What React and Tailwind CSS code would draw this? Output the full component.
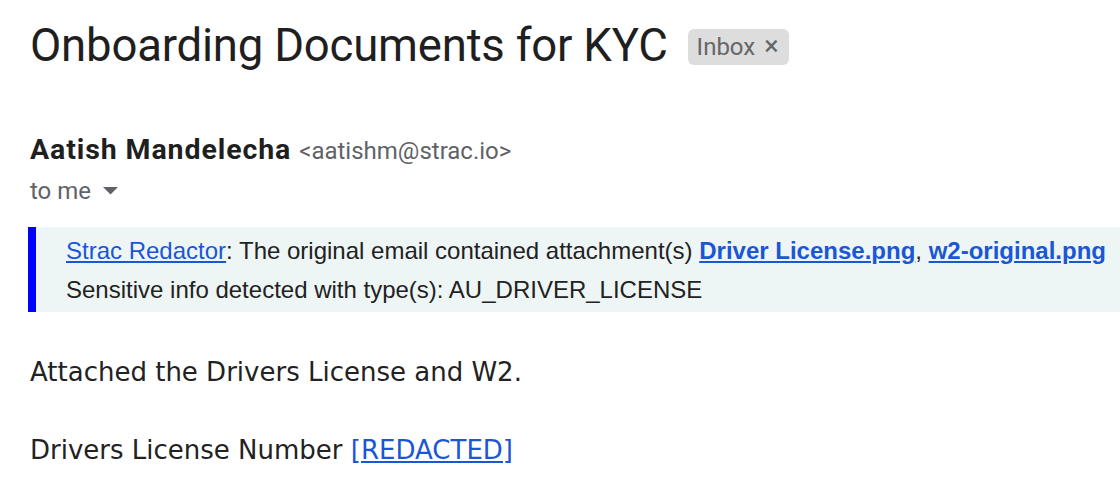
export default function App() {
  return (
    <div className="w-[1120px] h-[498px] overflow-hidden bg-white pl-[30px] pt-[18px]">
      <div className="flex items-center gap-[20px]">
        <h1 className="text-[45.5px] leading-[56px] text-[#1f1f1f] font-['Roboto',sans-serif] font-normal tracking-[-0.2px]">
          Onboarding Documents for KYC
        </h1>
        <span className="flex items-center gap-[9px] h-[36px] mt-[2px] pl-[9px] pr-[10px] rounded-[6px] bg-[#dddddd] text-[#666666] text-[24px] font-['Roboto',sans-serif]">
          Inbox
          <span className="text-[27px] leading-none -mt-[2px]">×</span>
        </span>
      </div>

      <div className="mt-[59px] flex items-baseline gap-[8px] font-['Roboto',sans-serif] leading-[34px]">
        <span className="text-[28.5px] font-bold text-[#1f1f1f] tracking-[0.9px]">Aatish Mandelecha</span>
        <span className="text-[24px] text-[#5f6368]">&lt;aatishm@strac.io&gt;</span>
      </div>
      <div className="mt-[8px] flex items-center gap-[12px] text-[24px] leading-[30px] text-[#5f6368] font-['Roboto',sans-serif]">
        to me
        <svg width="15" height="8" viewBox="0 0 15 8">
          <path d="M0 0 L15 0 L7.5 7.5 Z" fill="#5f6368" />
        </svg>
      </div>

      <div className="mt-[21px] flex h-[85px] -ml-[2px]">
        <div className="w-[8px] bg-[#0000ff]" />
        <div className="flex-1 bg-[#eef6f5] pl-[30px] pt-[4px] font-['Liberation_Sans',Arial,sans-serif] text-[24px] leading-[39px] text-[#222222] whitespace-nowrap">
          <div>
            <a className="text-[#1a56d6] underline">Strac Redactor</a>: The original email contained attachment(s){' '}
            <a className="text-[#1a56d6] underline font-bold">Driver License.png</a>,{' '}
            <a className="text-[#1a56d6] underline font-bold">w2-original.png</a>
          </div>
          <div>Sensitive info detected with type(s): AU_DRIVER_LICENSE</div>
        </div>
      </div>

      <div className="mt-[42px] font-['DejaVu_Sans',Verdana,sans-serif] text-[26px] leading-[36px] text-[#222222]">
        <p>Attached the Drivers License and W2.</p>
        <p className="mt-[42px]">
          Drivers License Number <a className="text-[#1a56d6] underline">[REDACTED]</a>
        </p>
      </div>
    </div>
  );
}
